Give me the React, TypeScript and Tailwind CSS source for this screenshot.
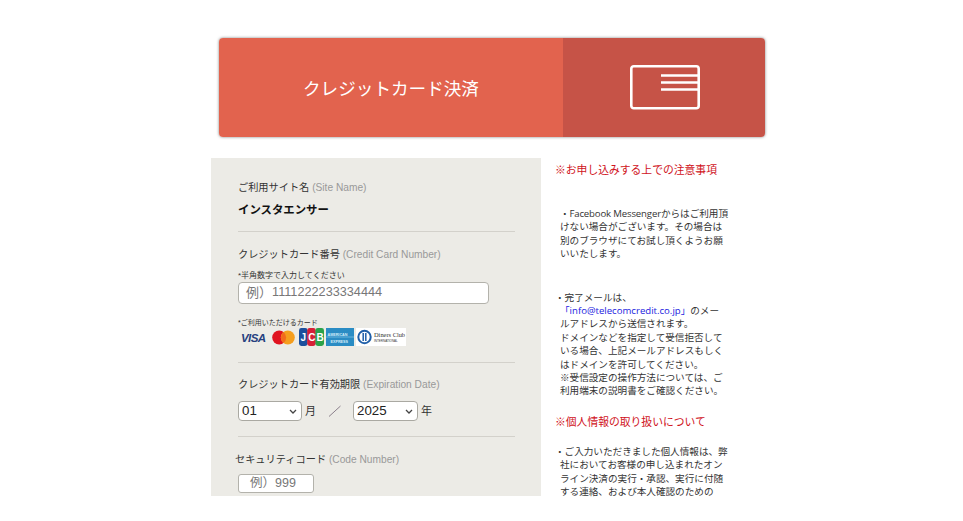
const jp = `font-['Liberation_Sans','Noto_Sans_CJK_JP',sans-serif]`;

function Visa() {
  return (
    <svg width="26" height="14" viewBox="0 0 26 14" className="shrink-0">
      <text x="0" y="11.5" fontFamily="Liberation Sans" fontSize="11.5" fontWeight="700" fontStyle="italic" fill="#25407f" textLength="25">VISA</text>
    </svg>
  );
}
function Master() {
  return (
    <svg width="23" height="15" viewBox="0 0 23 15" className="shrink-0">
      <circle cx="7.2" cy="7.5" r="7" fill="#e0131f" />
      <circle cx="15.8" cy="7.5" r="7" fill="#f59e1e" />
      <path d="M11.5 2a7 7 0 0 1 0 11a7 7 0 0 1 0-11z" fill="#f26b1d" />
    </svg>
  );
}
function Jcb() {
  return (
    <svg width="25" height="18" viewBox="0 0 25 18" className="shrink-0">
      <rect x="0" y="0" width="8.6" height="18" rx="2.4" fill="#1c4f9c" />
      <rect x="8.2" y="0" width="8.6" height="18" rx="2.4" fill="#d61f36" />
      <rect x="16.4" y="0" width="8.6" height="18" rx="2.4" fill="#2ba24a" />
      <text x="1.6" y="13" fontFamily="Liberation Sans" fontSize="10" fontWeight="700" fill="#fff">J</text>
      <text x="9.2" y="13" fontFamily="Liberation Sans" fontSize="10" fontWeight="700" fill="#fff">C</text>
      <text x="17.6" y="13" fontFamily="Liberation Sans" fontSize="10" fontWeight="700" fill="#fff">B</text>
    </svg>
  );
}
function Amex() {
  return (
    <svg width="28" height="18" viewBox="0 0 28 18" className="shrink-0">
      <rect width="28" height="18" fill="#2a8cc4" />
      <text x="1.5" y="7.5" fontFamily="Liberation Sans" fontSize="3.7" fontWeight="700" fill="#d5ecf8">AMERICAN</text>
      <path d="M0 9h28" stroke="#7cc0e4" strokeWidth="0.8" />
      <text x="4.5" y="14.5" fontFamily="Liberation Sans" fontSize="3.7" fontWeight="700" fill="#d5ecf8">EXPRESS</text>
    </svg>
  );
}
function Diners() {
  return (
    <svg width="50" height="18" viewBox="0 0 50 18" className="shrink-0">
      <rect width="50" height="18" fill="#fff" />
      <circle cx="8.5" cy="9" r="7.2" fill="#1f5fa8" />
      <circle cx="8.5" cy="9" r="5.2" fill="#fff" />
      <path d="M7.2 5v8M9.8 5v8" stroke="#1f5fa8" strokeWidth="1.5" />
      <text x="18" y="9" fontFamily="Liberation Serif" fontSize="6.4" fill="#333">Diners Club</text>
      <text x="18" y="14" fontFamily="Liberation Sans" fontSize="3" fill="#333">INTERNATIONAL</text>
    </svg>
  );
}

function Label({ jpText, en }: { jpText: string; en: string }) {
  return (
    <div className="text-[10.2px] leading-4 text-[#333]">
      {jpText} <span className="text-[#999]">{en}</span>
    </div>
  );
}

function Divider() {
  return <div className="h-px w-[277px] bg-[#d3d1cb]" />;
}

function Select({ value, w }: { value: string; w: string }) {
  return (
    <div className={`${w} flex h-[20px] items-center justify-between rounded-[4px] border border-[#aaa9a2] bg-white pl-[3px] pr-[4px] text-[13.3px] text-[#222]`}>
      <span>{value}</span>
      <svg width="8" height="5" viewBox="0 0 8 5"><path d="M1 1l3 3 3-3" fill="none" stroke="#444" strokeWidth="1.3" /></svg>
    </div>
  );
}

const body = `font-['Open_Sans','Noto_Sans_CJK_JP',sans-serif]`;

export default function App() {
  return (
    <div className={`h-[521px] w-[963px] overflow-hidden bg-white ${jp}`}>
      <div className="ml-[219px] mt-[38px] flex h-[99px] w-[546px] overflow-hidden rounded-[4px] shadow-[0_0_3px_rgba(0,0,0,0.5)]">
        <div className="flex w-[344px] items-center bg-[#e2634e] pl-[84px] pt-[3px] text-[17.6px] text-white">クレジットカード決済</div>
        <div className="flex flex-1 items-center justify-center bg-[#c65347] pl-[1px]">
          <svg width="70" height="45" viewBox="0 0 70 45" fill="none" stroke="#fff">
            <rect x="1.3" y="1.3" width="67.4" height="42" rx="2.5" strokeWidth="2.6" />
            <path d="M31 10.5h38M31 17.5h38M31 24.5h38" strokeWidth="2.5" />
          </svg>
        </div>
      </div>

      <div className="ml-[211px] mt-[21px] flex h-[338px] items-start">
        <div className="h-full w-[330px] shrink-0 bg-[#ecebe6] pl-[27px]">
          <div className="pt-[22px]"><Label jpText="ご利用サイト名" en="(Site Name)" /></div>
          <div className="mt-[4px] text-[11.4px] font-bold leading-[20px] text-[#111]">インスタエンサー</div>
          <div className="mt-[11px]"><Divider /></div>
          <div className="mt-[15px]"><Label jpText="クレジットカード番号" en="(Credit Card Number)" /></div>
          <div className="mt-[7px] text-[8px] leading-[12px] text-[#333]">*半角数字で入力してください</div>
          <div className="flex h-[22px] w-[251px] items-center rounded-[4px] border border-[#b3b2ab] bg-white pl-[7px] text-[13px] text-[#777]">
            <span>例）</span><span className="text-[12.7px]">1111222233334444</span>
          </div>
          <div className="mt-[14px] text-[7px] leading-[10px] text-[#333]">*ご利用いただけるカード</div>
          <div className="flex h-[18px] items-center">
            <div className="ml-[3px] mr-[5px]"><Visa /></div>
            <div className="mr-[4px]"><Master /></div>
            <Jcb />
            <div className="ml-[2px] mr-[2px]"><Amex /></div>
            <Diners />
          </div>
          <div className="mt-[16px]"><Divider /></div>
          <div className="mt-[14px]"><Label jpText="クレジットカード有効期限" en="(Expiration Date)" /></div>
          <div className="mt-[8px] flex h-[20px] items-center text-[11px] text-[#333]">
            <Select value="01" w="w-[64px]" />
            <span className="ml-[3px]">月</span>
            <svg width="14" height="12" viewBox="0 0 14 12" className="ml-[12px]"><path d="M1 11.5L12.5 1" stroke="#8a7f8a" /></svg>
            <div className="ml-[11px]"><Select value="2025" w="w-[65px]" /></div>
            <span className="ml-[3px]">年</span>
          </div>
          <div className="mt-[15px]"><Divider /></div>
          <div className="-ml-[3px] mt-[15px]"><Label jpText="セキュリティコード" en="(Code Number)" /></div>
          <div className="mt-[6px] flex h-[19px] w-[76px] items-center rounded-[3px] border border-[#b3b2ab] bg-white pl-[11px] text-[12.5px] text-[#777]">
            例）999
          </div>
        </div>

        <div className={`ml-[14px] w-[180px] whitespace-nowrap text-[9.6px] leading-[13.4px] text-[#333] ${body}`}>
          <div className="mt-[5px] text-[10.8px] leading-[14px] text-[#d0121b]">※お申し込みする上での注意事項</div>
          <p className="mt-[30px] pl-[5px]">
            <span className="tracking-[-0.15px]">・Facebook Messenger</span>からはご利用頂<br />
            けない場合がございます。その場合は<br />
            別のブラウザにてお試し頂くようお願<br />
            いいたします。
          </p>
          <p className="mt-[30px] pl-[5px]">
            <span className="-ml-[5px]">・完了メールは、</span><br />
            <span className="text-[#1a1ae0]">「info@telecomcredit.co.jp」</span>のメー<br />
            ルアドレスから送信されます。<br />
            ドメインなどを指定して受信拒否して<br />
            いる場合、上記メールアドレスもしく<br />
            はドメインを許可してください。<br />
            ※受信設定の操作方法については、ご<br />
            利用端末の説明書をご確認ください。
          </p>
          <div className="mt-[17px] text-[10.8px] leading-[14px] text-[#d0121b]">※個人情報の取り扱いについて</div>
          <p className="mt-[16px] pl-[5px]">
            <span className="-ml-[5px]">・ご入力いただきました個人情報は、弊</span><br />
            社においてお客様の申し込まれたオン<br />
            ライン決済の実行・承認、実行に付随<br />
            する連絡、および本人確認のための
          </p>
        </div>
      </div>
    </div>
  );
}
